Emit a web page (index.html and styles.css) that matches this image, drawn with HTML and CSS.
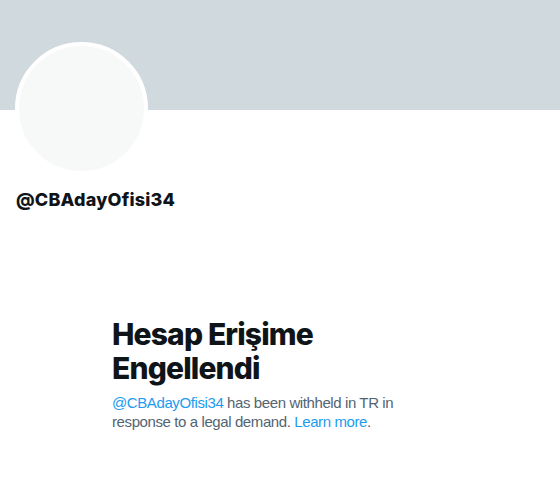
FILE: index.html
```html
<!DOCTYPE html>
<html lang="tr">
<head>
<meta charset="utf-8">
<title>@CBAdayOfisi34</title>
<link rel="stylesheet" href="styles.css">
</head>
<body>
<div class="profile">
  <div class="banner"></div>
  <div class="head">
    <div class="avatar"><div class="avatar-inner"></div></div>
    <div class="handle">@CBAdayOfisi34</div>
  </div>
  <div class="empty">
    <h1 class="empty-title">Hesap Erişime Engellendi</h1>
    <p class="empty-text"><a class="link" href="#">@CBAdayOfisi34</a> has been withheld in TR in response to a legal demand. <a class="link" href="#">Learn more</a>.</p>
  </div>
</div>
</body>
</html>
```
FILE: styles.css
```css
html, body {
  margin: 0;
  padding: 0;
  background: #ffffff;
}
body {
  font-family: "Inter", "Roboto", "Liberation Sans", sans-serif;
  color: #0f1419;
}
.profile {
  width: 560px;
}
.banner {
  height: 110px;
  background: #cfd9de;
}
.head {
  padding: 0 16px;
}
.avatar {
  width: 125px;
  height: 125px;
  border: 4px solid #ffffff;
  border-radius: 50%;
  background: #f7f9f9;
  margin-top: -68px;
  margin-left: -1px;
}
.avatar-inner {
  width: 100%;
  height: 100%;
  border-radius: 50%;
}
.handle {
  margin-top: 13px;
  font-size: 18px;
  line-height: 24px;
  font-weight: 800;
  letter-spacing: 0.2px;
}
.empty {
  width: 336px;
  margin: 105px auto 0;
}
.empty-title {
  margin: 0 0 8px;
  font-size: 30px;
  line-height: 34px;
  font-weight: 800;
  letter-spacing: -0.85px;
}
.empty-text {
  margin: 0;
  font-family: "Liberation Sans", "Inter", sans-serif;
  font-size: 15px;
  line-height: 19px;
  letter-spacing: -0.4px;
  color: #536471;
}
.link {
  color: #1d9bf0;
  text-decoration: none;
}
```
